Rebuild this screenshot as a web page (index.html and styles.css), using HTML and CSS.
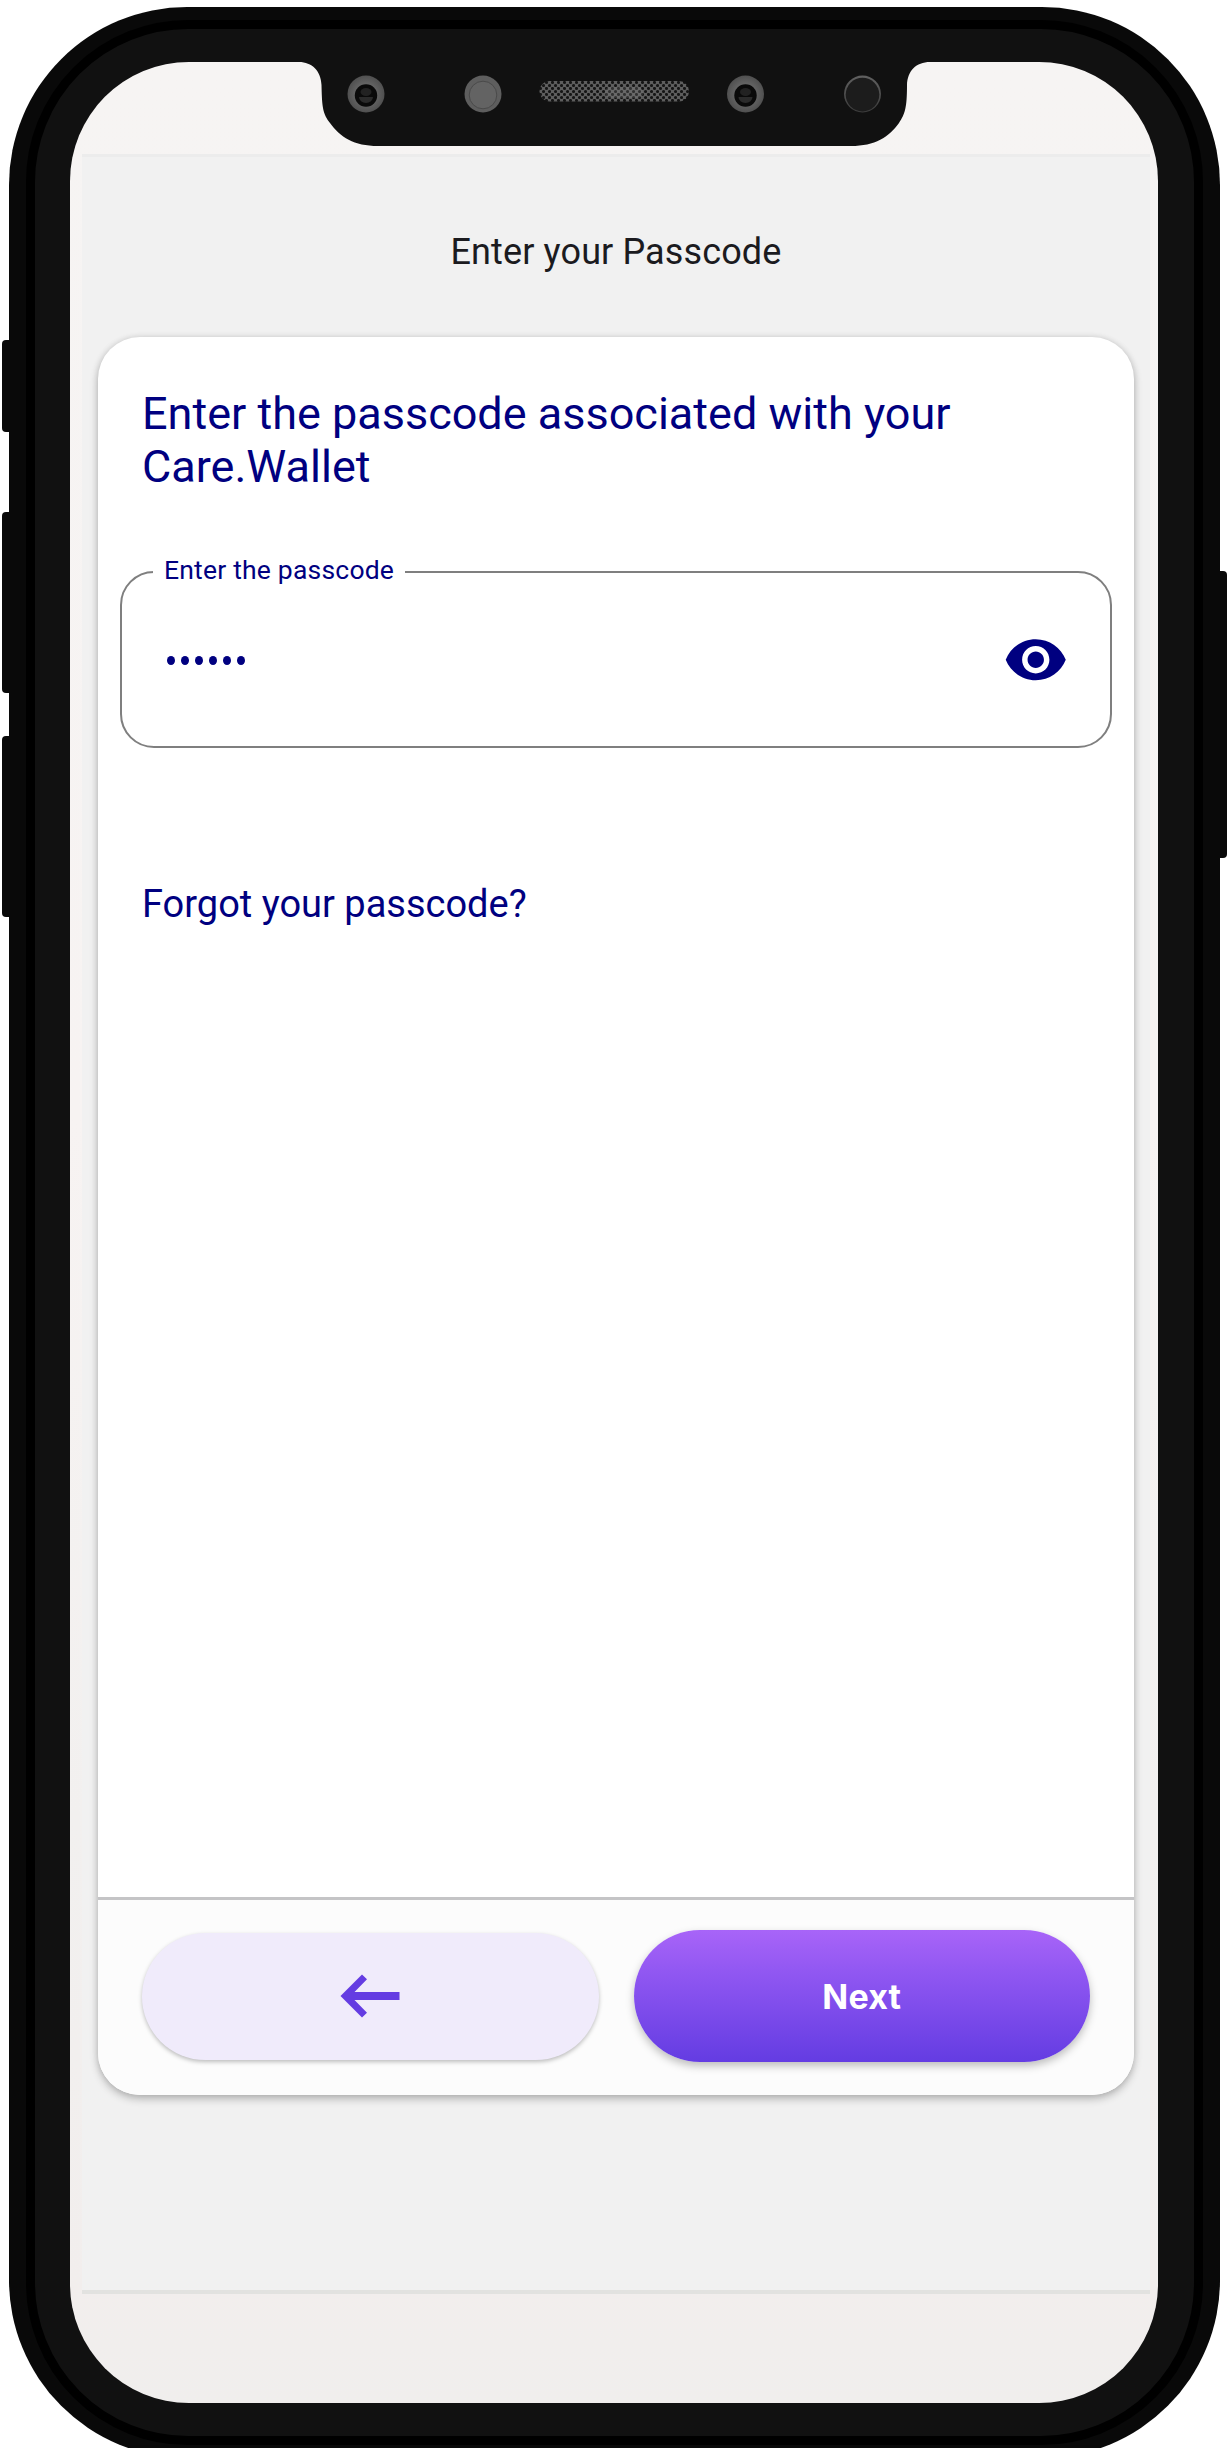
FILE: index.html
```html
<!DOCTYPE html>
<html lang="en">
<head>
<meta charset="utf-8">
<title>Enter your Passcode</title>
<link rel="stylesheet" href="styles.css">
</head>
<body>
<div class="stage">
  <span class="side-key key-silent"></span>
  <span class="side-key key-up"></span>
  <span class="side-key key-down"></span>
  <span class="side-key key-power"></span>
  <div class="phone">
    <div class="bezel">
      <div class="screen">
        <main class="app">
          <h1 class="title">Enter your Passcode</h1>
          <section class="card">
            <div class="content">
              <h2 class="heading">Enter the passcode associated with your Care.Wallet</h2>
              <div class="field">
                <label class="field-label">Enter the passcode</label>
                <span class="dots"><i></i><i></i><i></i><i></i><i></i><i></i></span>
                <svg class="eye" viewBox="0 0 24 24"><path d="M12 4.5C7 4.5 2.73 7.61 1 12c1.73 4.39 6 7.5 11 7.5s9.27-3.11 11-7.5c-1.73-4.39-6-7.5-11-7.5zM12 17c-2.76 0-5-2.24-5-5s2.24-5 5-5 5 2.24 5 5-2.24 5-5 5zm0-8c-1.66 0-3 1.34-3 3s1.34 3 3 3 3-1.34 3-3-1.34-3-3-3z"/></svg>
              </div>
              <a class="forgot">Forgot your passcode?</a>
            </div>
            <footer class="actions">
              <button class="btn back" aria-label="Back"><svg class="arrow" viewBox="0 0 60 44"><path d="M22 0.5 L27 5.2 L14.5 18 H59.5 V26 H14.5 L27 38.800 L22 43.5 L0.500 22 Z"/></svg></button>
              <button class="btn next">Next</button>
            </footer>
          </section>
        </main>
      </div>
    </div>
  </div>
  <svg class="notch" viewBox="290 54 650 94">
    <defs>
      <pattern id="mesh" x="539" y="81" width="6" height="6" patternUnits="userSpaceOnUse">
        <rect width="6" height="6" fill="#5e5e5e"/>
        <circle cx="1.500" cy="1.500" r="1.550" fill="#151515"/>
        <circle cx="4.500" cy="4.500" r="1.550" fill="#151515"/>
      </pattern>
      <radialGradient id="ring"><stop offset=".5" stop-color="#666"/><stop offset="1" stop-color="#505050"/></radialGradient>
      <linearGradient id="rim" x1="0" y1="0" x2="0" y2="1"><stop offset="0" stop-color="#606060"/><stop offset="1" stop-color="#3c3c3c"/></linearGradient>
      <g id="lens">
        <circle r="18.500" fill="url(#ring)"/>
        <circle cy="1.500" r="11.200" fill="#0a0a0a"/>
        <ellipse cy="-2" rx="5.500" ry="4" fill="#222"/>
        <path d="M-7 3H7A7 6 0 0 1-7 3Z" fill="#2b2b2b"/>
      </g>
    </defs>
    <path d="M290 54V62H299C312 62 321 71 321.500 85C322 108 323 114 330 123C340 137 354 146 378 146H851C875 146 889 137 899 123C905 114 907 108 907 85C907.500 71 916 62 930 62H940V54Z" fill="#111"/>
    <use href="#lens" x="366" y="94"/>
    <circle cx="483" cy="94" r="18.500" fill="#5e5e5e"/>
    <circle cx="483" cy="95" r="13.800" fill="#636363" stroke="#4a4a4a"/>
    <rect x="539.500" y="81" width="149.500" height="20.500" rx="10" fill="url(#mesh)"/>
    <rect x="605" y="87" width="38" height="11" rx="5" fill="#8a8a8a" opacity=".25"/>
    <use href="#lens" x="745.500" y="94"/>
    <circle cx="862.500" cy="94" r="18.500" fill="url(#rim)"/>
    <circle cx="862.500" cy="94.600" r="16.800" fill="#1c1c1c"/>
  </svg>
</div>
</body>
</html>
```
FILE: styles.css
```css
* { box-sizing: border-box; }
body { margin: 0; background: #fff; font-family: Roboto, sans-serif; }
.stage { position: relative; height: 2448px; overflow: hidden; padding: 7px 12px 0 9px; }

/* Handset */
.phone { height: 2451px; padding: 13px 17px; border-radius: 178px; background: #090909; }
.bezel { height: 2425px; padding: 33px 36px 34px 35px; border: 9px solid #000; border-radius: 162px; background: #111; }
.screen {
  height: 2341px; padding: 92px 8px 108px 12px; border-radius: 119px;
  background: linear-gradient(#f6f4f3, #f7f3f2 45%, #f2f0ef 75%, #f2eeed 95%, #f0eeed);
}
.side-key { position: absolute; background: #090909; }
.key-silent, .key-up, .key-down { left: 2px; width: 12px; border-radius: 4px 0 0 4px; }
.key-silent { top: 340px; height: 92px; }
.key-up { top: 512px; height: 181px; }
.key-down { top: 736px; height: 181px; }
.key-power { left: 1215px; top: 571px; width: 12px; height: 287px; border-radius: 0 4px 4px 0; }
.notch { position: absolute; left: 290px; top: 54px; width: 650px; height: 94px; }

/* App */
.app {
  display: flex; flex-direction: column; height: 2140px; padding: 0 16px;
  border-top: 3px solid #ececec; border-bottom: 4px solid #e2e2e0; background: #f1f1f1;
}
.title { margin: 74px 0 0; height: 106px; font-size: 36px; font-weight: 400; line-height: 42px; letter-spacing: .12px; text-align: center; color: #1b1b1f; }
.card {
  display: flex; flex-direction: column; height: 1758px; border-radius: 42px; overflow: hidden; background: #fff;
  box-shadow: 0 4px 8px rgba(0,0,0,.24), 0 0 6px rgba(0,0,0,.1);
}
.content { flex: 1; padding: 50px 22px 0; color: #000080; }
.heading { margin: 0 0 0 22px; font-size: 45px; font-weight: 400; line-height: 53px; }
.field {
  position: relative; display: flex; align-items: center; justify-content: space-between;
  height: 177px; margin-top: 78px; padding: 0 42px 0 45px; border: 2px solid #7f7f7f; border-radius: 34px;
}
.field-label { position: absolute; left: 31px; top: -18px; width: 252px; padding-left: 11px; background: #fff; font-size: 26.500px; line-height: 30px; letter-spacing: .2px; white-space: nowrap; }
.dots { display: flex; gap: 6px; padding-top: 2px; }
.dots i { width: 8px; height: 9px; border-radius: 50%; background: #000080; }
.eye { width: 65.500px; height: 65.500px; fill: #000080; }
.forgot { display: block; margin: 133px 0 0 22px; font-size: 38px; line-height: 46px; }
.actions { display: flex; align-items: center; gap: 35px; height: 198px; padding: 0 44px 3px; border-top: 3px solid #c4c4c6; background: #fcfcfc; }
.btn { display: flex; align-items: center; justify-content: center; flex: 1; padding: 0; border: 0; border-radius: 66px; font: 700 34px Inter, sans-serif; color: #fff; }
.back { height: 127px; background: #f0ebfb; box-shadow: 0 2px 4px rgba(0,0,0,.25); }
.next { height: 132px; background: linear-gradient(#a864f8, #8b54f0 40%, #643ce2); box-shadow: 0 4px 8px rgba(0,0,0,.25); letter-spacing: .2px; }
.arrow { width: 60px; height: 44px; fill: #643ce2; }
```
